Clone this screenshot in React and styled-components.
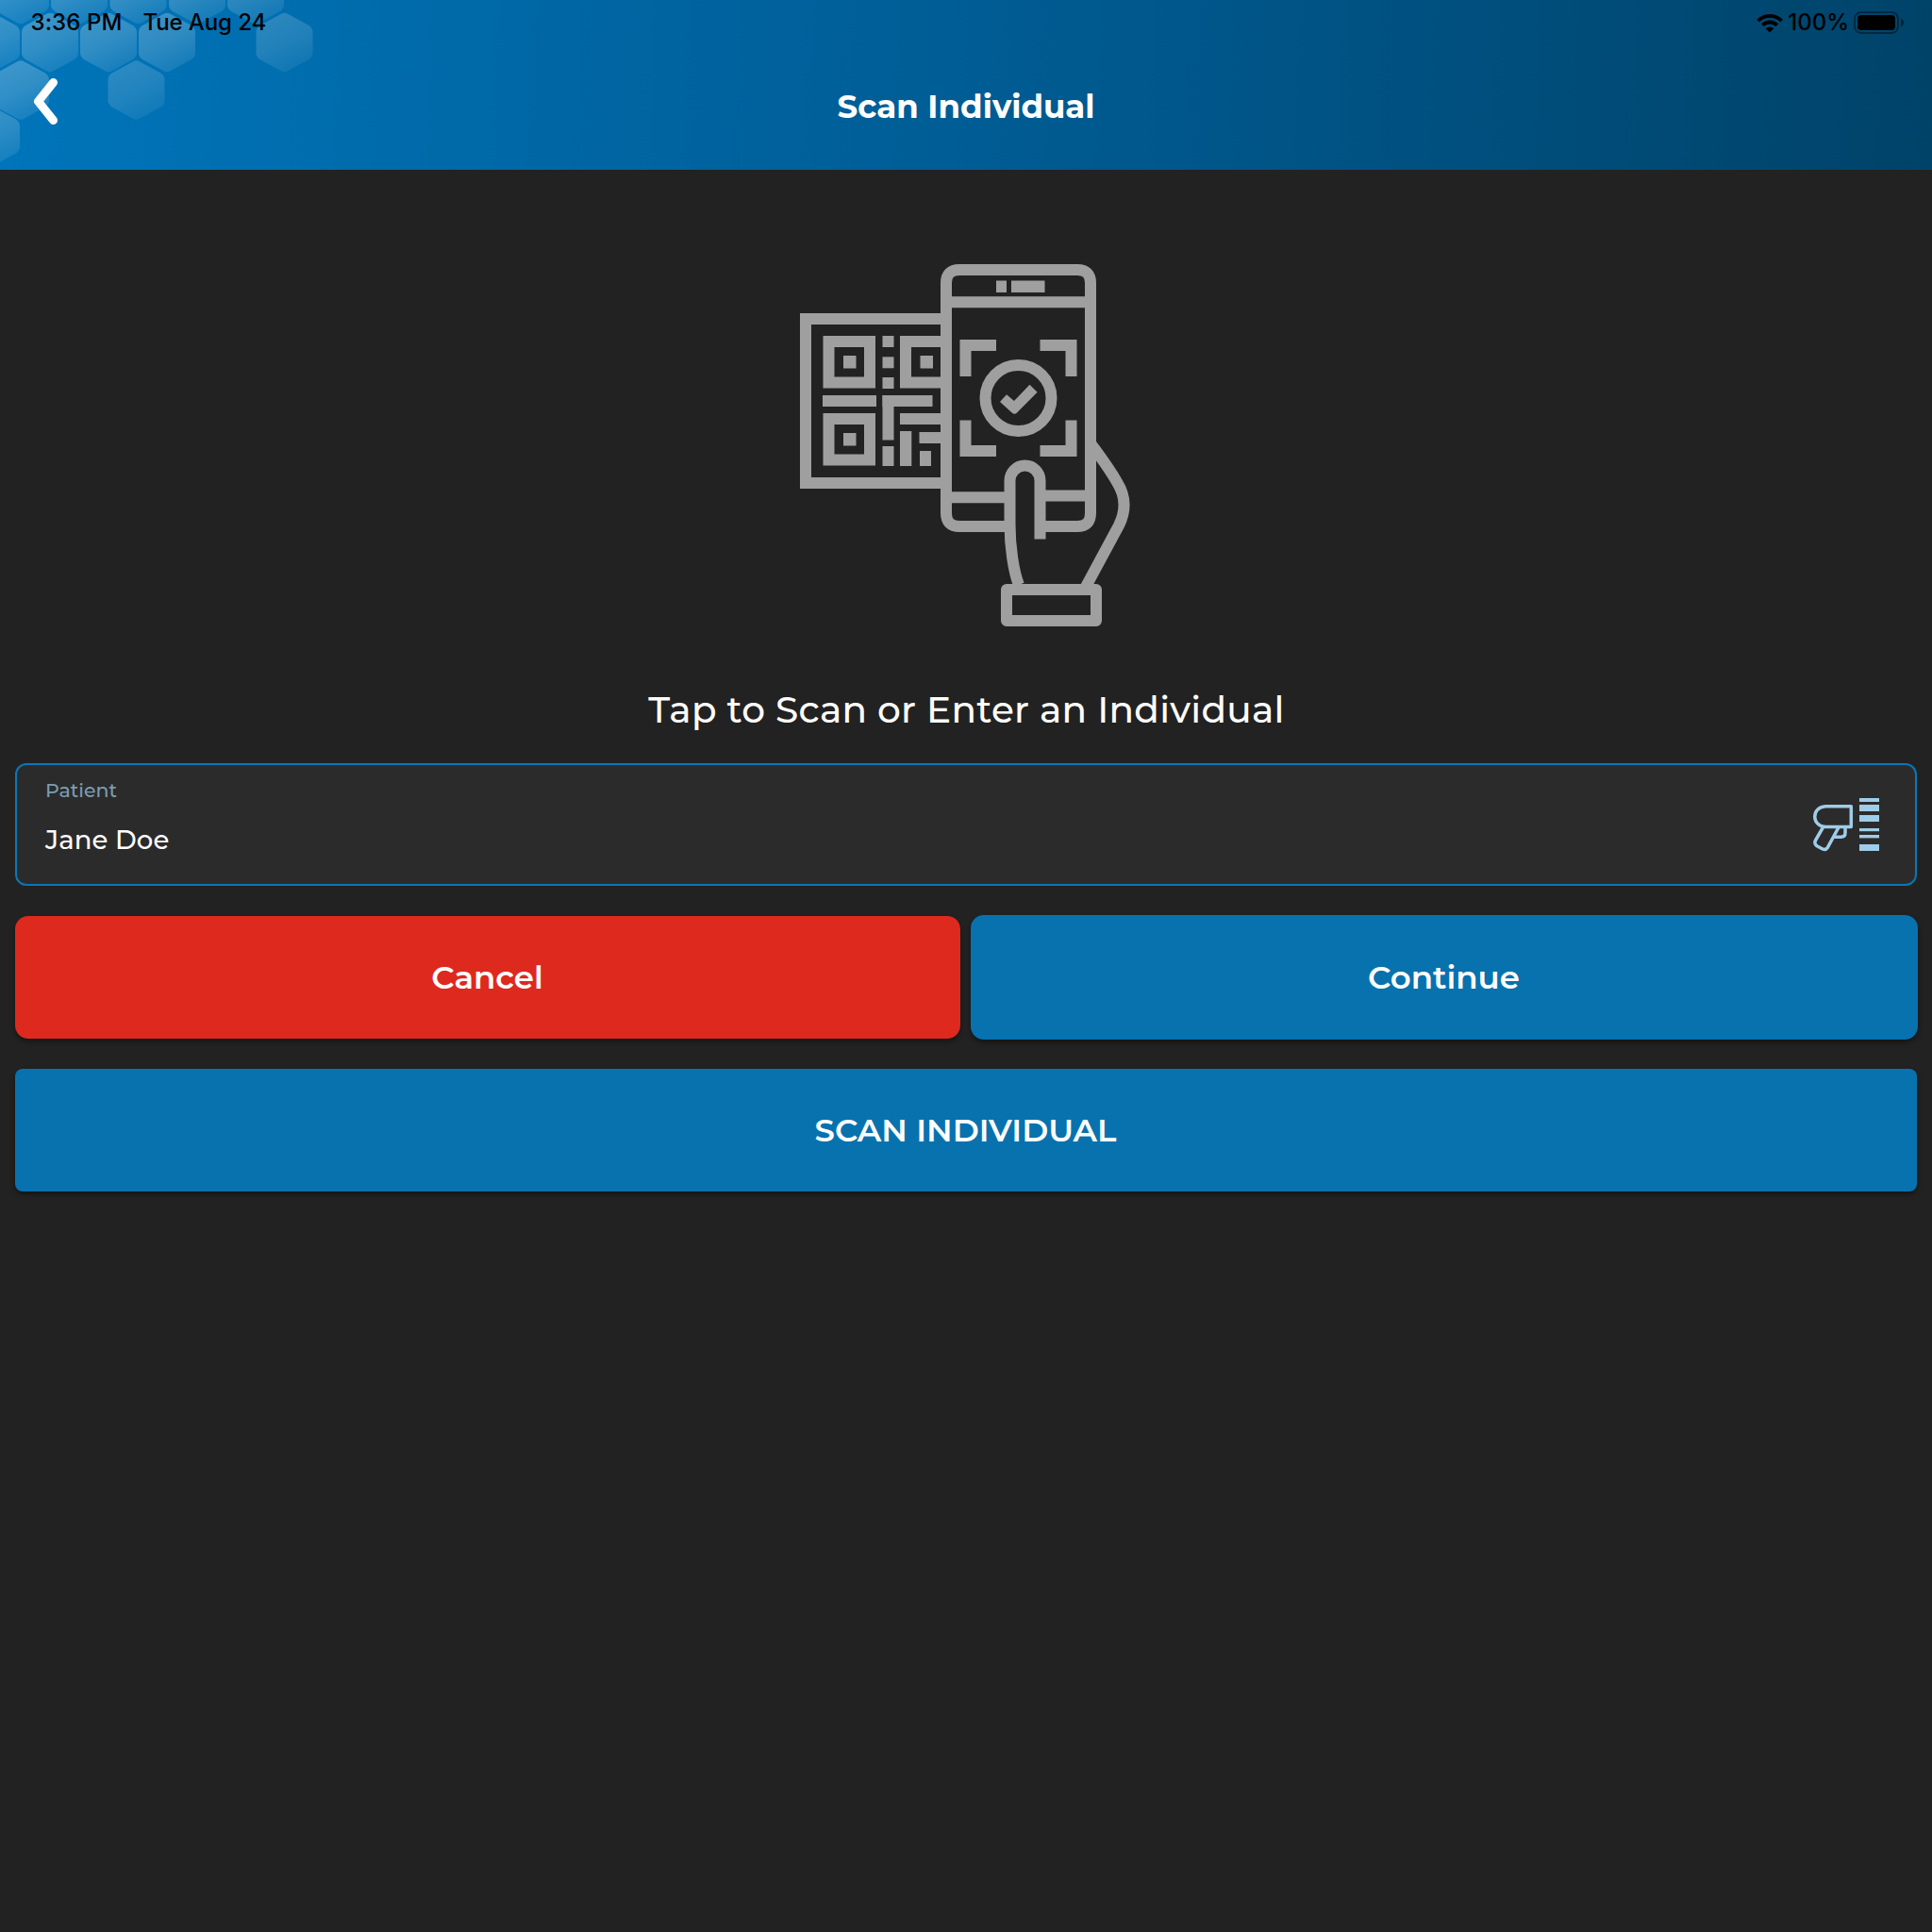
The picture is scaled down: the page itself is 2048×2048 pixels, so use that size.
import React from "react";
import styled, { createGlobalStyle } from "styled-components";

const GlobalStyle = createGlobalStyle`
  *, *::before, *::after { box-sizing: border-box; }
  body { margin: 0; background: #222222; }
`;

const Screen = styled.div`
  display: flex;
  flex-direction: column;
  min-height: 2048px;
  background: #222222;
  color: #ffffff;
  font-family: Montserrat, Inter, "Liberation Sans", sans-serif;
`;

const Header = styled.header`
  position: relative;
  display: flex;
  flex-direction: column;
  height: 180px;
  background: linear-gradient(92deg, #0075ba 0%, #005e97 47%, #004369 100%);
`;

const HexPattern = styled.svg`
  position: absolute;
  left: 0;
  top: 0;
`;

const StatusBar = styled.div`
  position: relative;
  display: flex;
  justify-content: space-between;
  align-items: center;
  height: 48px;
  padding: 0 29px 0 32.5px;
  color: #000000;
  font-family: Inter, "Liberation Sans", sans-serif;
`;

const StatusGroup = styled.div`
  display: flex;
  align-items: center;
  gap: ${(p) => p.$gap}px;
`;

const Label = styled.span`
  display: block;
  white-space: nowrap;
  font-size: ${(p) => p.$size}px;
  line-height: ${(p) => p.$line || p.$size}px;
  font-weight: ${(p) => p.$weight || 500};
  letter-spacing: ${(p) => p.$spacing || 0}px;
  color: ${(p) => p.$color || "inherit"};
`;

const NavBar = styled.div`
  position: relative;
  display: grid;
  grid-template-columns: 100px 1fr 100px;
  height: 132px;
`;

const BackButton = styled.button`
  display: flex;
  padding: 33px 0 0 34px;
  border: 0;
  background: none;
`;

const Title = styled.h1`
  margin: 0;
  padding-top: 45px;
  display: flex;
  justify-content: center;
`;

const Main = styled.main`
  display: flex;
  flex-direction: column;
  padding: 98px 15px 0 16px;
`;

const Hero = styled.div`
  display: flex;
  justify-content: center;
  height: 388px;
  padding-right: 1px;
`;

const Prompt = styled.h2`
  display: flex;
  justify-content: center;
  margin: 0;
  height: 143px;
  padding-top: 62px;
`;

const Field = styled.div`
  display: flex;
  justify-content: space-between;
  height: 130px;
  margin-right: 1px;
  padding: 0 37px 0 30px;
  border: 2px solid #0a76b8;
  border-radius: 12px;
  background: #2b2b2b;
`;

const FieldText = styled.div`
  display: flex;
  flex-direction: column;
  padding-top: 15px;
  gap: 24px;
`;

const ScannerSlot = styled.div`
  padding-top: 34px;
`;

const Actions = styled.div`
  display: grid;
  grid-template-columns: 1002px 1004px;
  justify-content: space-between;
  align-items: center;
  margin-top: 31px;
`;

const Button = styled.button`
  display: flex;
  align-items: center;
  justify-content: center;
  height: ${(p) => p.$height}px;
  padding: 0 1px 0 0;
  margin: ${(p) => p.$margin || 0};
  border: 0;
  border-radius: ${(p) => p.$radius}px;
  background: ${(p) => p.$bg};
  color: #ffffff;
  font-family: inherit;
  box-shadow: 0 3px 5px rgba(0, 0, 0, 0.4);
`;

const hexPath = (cx, cy) => {
  const w = 30;
  const h = 32;
  const s = 16;
  return [
    `M${cx - 4} ${cy - h + 2}`,
    `Q${cx} ${cy - h - 0.5} ${cx + 4} ${cy - h + 2}`,
    `L${cx + w - 4} ${cy - s - 2}`,
    `Q${cx + w} ${cy - s + 1} ${cx + w} ${cy - s + 5}`,
    `V${cy + s - 5}`,
    `Q${cx + w} ${cy + s - 1} ${cx + w - 4} ${cy + s + 2}`,
    `L${cx + 4} ${cy + h - 2}`,
    `Q${cx} ${cy + h + 0.5} ${cx - 4} ${cy + h - 2}`,
    `L${cx - w + 4} ${cy + s + 2}`,
    `Q${cx - w} ${cy + s - 1} ${cx - w} ${cy + s - 5}`,
    `V${cy - s + 5}`,
    `Q${cx - w} ${cy - s + 1} ${cx - w + 4} ${cy - s - 2}`,
    "Z",
  ].join(" ");
};

const hexes = [
  [22, -6, 1], [84, -6, 1], [146.5, -6, 1], [209, -6, 0.95], [271, -6, 0.85],
  [-9, 45, 1], [53, 45, 1], [115, 45, 1], [177, 45, 0.95], [301.5, 45, 0.7],
  [22, 95.5, 1], [144.5, 95.5, 0.7],
  [-9, 144.5, 0.9],
];

const Hexagons = () => (
  <HexPattern width="360" height="180" viewBox="0 0 360 180">
    <defs>
      <linearGradient id="hex" x1="0.25" y1="0" x2="0.7" y2="1">
        <stop offset="0" stopColor="#fff" stopOpacity="0.25" />
        <stop offset="0.5" stopColor="#fff" stopOpacity="0.19" />
        <stop offset="1" stopColor="#fff" stopOpacity="0.08" />
      </linearGradient>
    </defs>
    {hexes.map(([x, y, o]) => (
      <path key={`${x},${y}`} d={hexPath(x, y)} fill="url(#hex)" opacity={o} />
    ))}
  </HexPattern>
);

const BackIcon = () => (
  <svg width="30" height="54" viewBox="34 81 30 54">
    <path d="M56.5 87.5L40.5 107.5L56.5 127.5" fill="none" stroke="#fff" strokeWidth="9" strokeLinecap="round" strokeLinejoin="round" />
  </svg>
);

const WifiIcon = () => (
  <svg width="28" height="21" viewBox="1861 13.5 28 21">
    <g fill="none" stroke="#000" strokeWidth="3.9">
      <path d="M1862.5 21.6a17.6 17.6 0 0 1 25 0" />
      <path d="M1867.2 26.2a11 11 0 0 1 15.6 0" />
    </g>
    <path d="M1875 34l-4.3-4.3a6.3 6.3 0 0 1 8.6 0z" />
  </svg>
);

const BatteryIcon = () => (
  <svg width="54" height="24" viewBox="1965 12 54 24">
    <rect x="1966" y="13" width="46" height="22" rx="7" fill="none" stroke="#000" strokeOpacity="0.4" strokeWidth="2" />
    <rect x="1969" y="16" width="40" height="16" rx="4" />
    <path d="M2015 19.8q3 1.2 3 4.2t-3 4.2z" fillOpacity="0.5" />
  </svg>
);

const rects = [
  [894, 377, 13.5, 13.5], [975.5, 377, 13.5, 13.5], [894, 459, 13.5, 13.5],
  [935.5, 356, 12, 12], [935.5, 378.3, 12, 12], [935.5, 400, 12, 12],
  [872, 419, 57, 12], [935.5, 419, 53, 12], [935.5, 419, 12, 47.5],
  [935.5, 473, 12, 21], [954, 438, 45, 12], [954, 457, 12.3, 37],
  [974.5, 458, 24, 12], [975, 478, 12, 16],
  [1056, 297.5, 11, 12.5], [1072, 297.5, 35.5, 12.5],
];

const ScanIllustration = () => (
  <svg width="352" height="388" viewBox="848 278 352 388">
    <g fill="#9f9f9f">
      {rects.map(([x, y, w, h]) => (
        <rect key={`${x},${y},${w}`} x={x} y={y} width={w} height={h} />
      ))}
      <path d="M1060 426L1067 418.2L1075 425L1091.5 407.7L1099.6 415.7L1078 437.5Q1075.5 439.8 1073 437.8Z" />
    </g>
    <g fill="none" stroke="#9f9f9f" strokeWidth="12">
      <path d="M1000 338H854V512H1000" />
      <path d="M878.5 362H922V405.5H878.5Z" />
      <path d="M1000 362H960V405.5H1000" />
      <path d="M878.5 444H922V487.5H878.5Z" />
      <path d="M1070.5 558H1017Q1003 558 1003 544V300Q1003 286 1017 286H1142Q1156 286 1156 300V544Q1156 558 1142 558H1104" />
      <path d="M1003 320.3H1156M1003 527.3H1070M1102.5 525.5H1156" />
      <path d="M1056 366H1023.5V399M1102.5 366H1135.5V399M1056 478H1023.5V445.5M1102.5 478H1135.5V445.5" />
      <circle cx="1079.5" cy="422" r="35" />
      <path d="M1102.5 571.5V509.5a16 16 0 0 0 -32 0V555C1070.5 580 1074.5 606 1080 620" />
      <path d="M1155 468.5C1164 481 1175 495 1184 511Q1198 533 1186 557L1151 622" />
      <rect x="1067" y="625" width="95" height="33" strokeLinejoin="round" />
    </g>
  </svg>
);

const ScannerIcon = () => (
  <svg width="72" height="58" viewBox="1921 845 72 58">
    <g fill="none" stroke="#9fcce8" strokeWidth="3.5" strokeLinejoin="round">
      <path d="M1962.3 854.7H1935C1920 855.5 1920 875.8 1935 876.4H1962.3Z" />
      <path d="M1932.5 877L1924.4 891Q1922.8 894.5 1926 896.7L1932.5 900.2Q1935.5 901.2 1937.5 898.2L1949 877" />
      <path d="M1956 877V883Q1956 887.2 1951.5 887.2H1943" />
    </g>
    <g fill="#9fcce8">
      {[[846, 4], [853, 7], [864, 7], [878, 3.2], [885, 3.4], [895, 7]].map(([y, h]) => (
        <rect key={y} x="1971" y={y} width="21" height={h} />
      ))}
    </g>
  </svg>
);

export default function App() {
  return (
    <Screen>
      <GlobalStyle />
      <Header>
        <Hexagons />
        <StatusBar>
          <StatusGroup $gap={22}>
            <Label $size={24} $spacing={0.1}>3:36 PM</Label>
            <Label $size={24} $spacing={-0.1}>Tue Aug 24</Label>
          </StatusGroup>
          <StatusGroup $gap={5}>
            <WifiIcon />
            <Label $size={24}>100%</Label>
            <BatteryIcon />
          </StatusGroup>
        </StatusBar>
        <NavBar>
          <BackButton><BackIcon /></BackButton>
          <Title><Label $size={34} $line={40} $weight={700}>Scan Individual</Label></Title>
        </NavBar>
      </Header>
      <Main>
        <Hero><ScanIllustration /></Hero>
        <Prompt><Label $size={39} $line={48} $spacing={0.25}>Tap to Scan or Enter an Individual</Label></Prompt>
        <Field>
          <FieldText>
            <Label $size={20.5} $line={24} $color="#7b9db2">Patient</Label>
            <Label $size={27.5} $line={32} $spacing={0.1}>Jane Doe</Label>
          </FieldText>
          <ScannerSlot><ScannerIcon /></ScannerSlot>
        </Field>
        <Actions>
          <Button $height={130} $radius={14} $bg="#de291e"><Label $size={34} $line={40} $weight={600}>Cancel</Label></Button>
          <Button $height={132} $radius={14} $bg="#0872af"><Label $size={34} $line={40} $weight={600}>Continue</Label></Button>
        </Actions>
        <Button $height={130} $radius={8} $bg="#0872af" $margin="31px 1px 0 0"><Label $size={34} $line={40} $weight={600}>SCAN INDIVIDUAL</Label></Button>
      </Main>
    </Screen>
  );
}
